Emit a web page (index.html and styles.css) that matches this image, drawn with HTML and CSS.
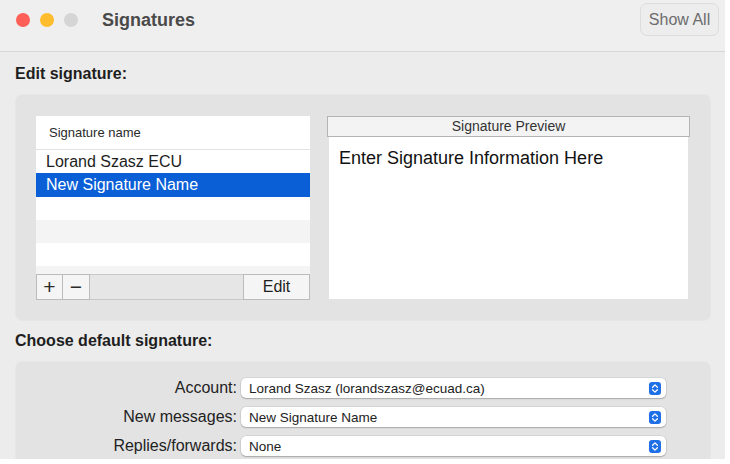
FILE: index.html
```html
<!DOCTYPE html>
<html lang="en">
<head>
  <meta charset="UTF-8">
  <meta name="viewport" content="width=device-width, initial-scale=1.0">
  <title>Signatures</title>
  <link rel="stylesheet" href="styles.css">
</head>
<body>
  <div class="window">
    <header class="titlebar">
      <div class="lights">
        <span class="light red"></span>
        <span class="light yellow"></span>
        <span class="light off"></span>
      </div>
      <h1 class="title">Signatures</h1>
      <button class="show-all">Show All</button>
    </header>

    <main class="content">
      <h2 class="section-title">Edit signature:</h2>
      <div class="group edit-group">
        <div class="sig-list">
          <div class="list-table">
            <div class="list-header">Signature name</div>
            <div class="list-rows">
              <div class="row">Lorand Szasz ECU</div>
              <div class="row selected">New Signature Name</div>
              <div class="row"></div>
              <div class="row alt"></div>
              <div class="row"></div>
              <div class="row alt"></div>
            </div>
          </div>
          <div class="list-tools">
            <button class="tool">+</button>
            <button class="tool">&minus;</button>
            <span class="tool-fill"></span>
            <button class="tool edit">Edit</button>
          </div>
        </div>

        <div class="preview">
          <div class="preview-header">Signature Preview</div>
          <div class="preview-body">Enter Signature Information Here</div>
        </div>
      </div>

      <h2 class="section-title">Choose default signature:</h2>
      <div class="group defaults-group">
        <div class="field">
          <label class="field-label">Account:</label>
          <div class="select">
            <span class="select-value">Lorand Szasz (lorandszasz@ecuad.ca)</span>
            <span class="stepper">
              <svg width="12" height="13" viewBox="0 0 12 13"><path d="M3.6 5.2 6 2.9 8.4 5.2M3.6 7.8 6 10.1 8.4 7.8" fill="none" stroke="#fff" stroke-width="1.3" stroke-linecap="round" stroke-linejoin="round"/></svg>
            </span>
          </div>
        </div>
        <div class="field">
          <label class="field-label">New messages:</label>
          <div class="select">
            <span class="select-value">New Signature Name</span>
            <span class="stepper">
              <svg width="12" height="13" viewBox="0 0 12 13"><path d="M3.6 5.2 6 2.9 8.4 5.2M3.6 7.8 6 10.1 8.4 7.8" fill="none" stroke="#fff" stroke-width="1.3" stroke-linecap="round" stroke-linejoin="round"/></svg>
            </span>
          </div>
        </div>
        <div class="field">
          <label class="field-label">Replies/forwards:</label>
          <div class="select">
            <span class="select-value">None</span>
            <span class="stepper">
              <svg width="12" height="13" viewBox="0 0 12 13"><path d="M3.6 5.2 6 2.9 8.4 5.2M3.6 7.8 6 10.1 8.4 7.8" fill="none" stroke="#fff" stroke-width="1.3" stroke-linecap="round" stroke-linejoin="round"/></svg>
            </span>
          </div>
        </div>
      </div>
    </main>
  </div>
</body>
</html>
```

FILE: styles.css
```css
* {
  margin: 0;
  padding: 0;
  box-sizing: border-box;
}

body {
  font-family: 'Liberation Sans', Arial, Helvetica, sans-serif;
  background: #fff;
  color: #1f1f1f;
}

button {
  font-family: inherit;
}

.window {
  width: 725px;
  height: 459px;
  background: #ececec;
  overflow: hidden;
}

/* title bar */

.titlebar {
  height: 52px;
  padding: 0 6px 12px 16px;
  display: flex;
  align-items: center;
  background: #efefef;
  border-bottom: 1px solid #d7d7d7;
}

.lights {
  display: flex;
  gap: 10px;
}

.light {
  width: 14px;
  height: 14px;
  border-radius: 50%;
}

.light.red { background: #fe5f57; }
.light.yellow { background: #febc2e; }
.light.off { background: #d5d5d5; }

.title {
  margin-left: 24px;
  font-size: 18px;
  line-height: 20px;
  font-weight: 700;
  color: #4a4a4a;
  flex: 1;
}

.show-all {
  width: 79px;
  height: 33px;
  border: 1px solid #dcdcdc;
  border-radius: 7px;
  background: #ededed;
  color: #6c6c6c;
  font-size: 16px;
}

/* content */

.content {
  padding: 12px 15px 0 15px;
}

.section-title {
  font-size: 16px;
  line-height: 20px;
  font-weight: 700;
  color: #1e1e1e;
  margin-bottom: 11px;
}

.group {
  margin-left: 1px;
  width: 694px;
  background: #e3e3e3;
  border-radius: 6px;
  box-shadow: 0 0 0 1px rgba(0, 0, 0, 0.025);
}

.edit-group {
  height: 225px;
  padding: 21px 20px 20px 20px;
  display: flex;
  gap: 17px;
  margin-bottom: 11px;
}

/* signature list */

.sig-list {
  width: 274px;
  display: flex;
  flex-direction: column;
}

.list-table {
  height: 158px;
  background: #fff;
  display: flex;
  flex-direction: column;
}

.list-header {
  height: 34px;
  padding-left: 13px;
  font-size: 13px;
  line-height: 33px;
  color: #2a2a2a;
  border-bottom: 1px solid #e3e3e3;
}

.list-rows {
  flex: 1;
  overflow: hidden;
}

.row {
  height: 23px;
  padding-left: 10px;
  font-size: 16px;
  line-height: 23px;
  color: #1e1e1e;
}

.row.alt {
  background: #f4f4f4;
}

.row.selected {
  height: 24px;
  line-height: 24px;
  background: #0a5fd7;
  color: #fff;
}

.list-tools {
  height: 26px;
  display: flex;
}

.tool {
  width: 27px;
  height: 26px;
  border: 1px solid #bcbcbc;
  background: #f5f5f5;
  color: #2b2b2b;
  font-size: 21px;
  line-height: 22px;
}

.tool + .tool {
  border-left: none;
}

.tool-fill {
  flex: 1;
  border-top: 1px solid #c9c9c9;
  border-bottom: 1px solid #c9c9c9;
  background: #e6e6e6;
}

.tool.edit {
  width: 67px;
  font-size: 16px;
  color: #1f1f1f;
}

/* preview pane */

.preview {
  width: 363px;
  display: flex;
  flex-direction: column;
}

.preview-header {
  height: 21px;
  background: #f3f3f3;
  border: 1px solid #b4b4b4;
  text-align: center;
  font-size: 14px;
  line-height: 19px;
  color: #333;
}

.preview-body {
  height: 162px;
  margin: 0 2px;
  background: #fff;
  padding: 10px 10px;
  font-size: 18px;
  line-height: 22px;
  color: #111;
}

/* default signature choices */

.defaults-group {
  padding: 16px 0 20px 0;
  display: flex;
  flex-direction: column;
  gap: 9px;
}

.field {
  display: flex;
  align-items: center;
  gap: 4px;
}

.field-label {
  width: 221px;
  text-align: right;
  font-size: 16px;
  color: #222;
}

.select {
  width: 425px;
  height: 20px;
  display: flex;
  align-items: center;
  padding: 0 5px 0 8px;
  background: #fff;
  border-radius: 5px;
  box-shadow: 0 0 0 0.5px rgba(0, 0, 0, 0.12), 0 1px 1.5px rgba(0, 0, 0, 0.22);
}

.select-value {
  flex: 1;
  font-size: 13.5px;
  color: #222;
}

.stepper {
  width: 12px;
  height: 13px;
  border-radius: 3px;
  background: #1f6fe6;
  display: flex;
}
```
